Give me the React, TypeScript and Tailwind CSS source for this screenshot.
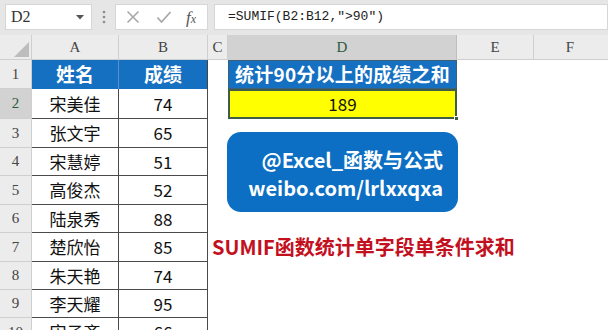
import React from "react";

const CJK = '"Noto Sans CJK SC", "Noto Sans", sans-serif';
const SERIF = '"Liberation Serif", "Noto Sans CJK SC", serif';

const rows: [string, string][] = [
  ["宋美佳", "74"],
  ["张文宇", "65"],
  ["宋慧婷", "51"],
  ["高俊杰", "52"],
  ["陆泉秀", "88"],
  ["楚欣怡", "85"],
  ["朱天艳", "74"],
  ["李天耀", "95"],
  ["宋子齐", "66"],
];

const rowHeights = [29, 30, 29, 28, 29, 28, 29, 28, 28, 29];

function RowHeader({ n, h, active }: { n: number; h: number; active?: boolean }) {
  return (
    <div
      className={
        "w-[32px] shrink-0 flex items-center justify-center border-b border-r border-[#cfcfcf] text-[15px] " +
        (active ? "bg-[#d2d2d2] text-[#2d5b3e]" : "bg-[#ececec] text-[#444]")
      }
      style={{ height: h, fontFamily: SERIF }}
    >
      {n}
    </div>
  );
}

export default function App() {
  return (
    <div className="relative w-[608px] h-[330px] overflow-hidden bg-white" style={{ fontFamily: CJK }}>
      {/* Toolbar */}
      <div className="h-[35px] bg-[#e6e6e6] flex items-start pt-[4px]">
        <div className="ml-[5px] w-[87px] h-[26px] bg-white border border-[#d6d6d6] flex items-center justify-between pl-[5px] pr-[7px]">
          <span className="text-[16px] text-[#333]" style={{ fontFamily: SERIF }}>D2</span>
          <svg width="8" height="5" viewBox="0 0 8 5">
            <polygon points="0,0 8,0 4,4.5" fill="#555" />
          </svg>
        </div>
        <div className="w-[23px] h-[26px] flex items-center justify-center">
          <svg width="4" height="14" viewBox="0 0 4 14">
            <circle cx="2" cy="2" r="1.3" fill="#8a8a8a" />
            <circle cx="2" cy="7" r="1.3" fill="#8a8a8a" />
            <circle cx="2" cy="12" r="1.3" fill="#8a8a8a" />
          </svg>
        </div>
        <div className="w-[93px] h-[26px] bg-white border border-[#d6d6d6] flex items-center">
          <svg className="ml-[10px]" width="14" height="14" viewBox="0 0 14 14">
            <path d="M1.5 1.5 L12.5 12.5 M12.5 1.5 L1.5 12.5" stroke="#a8a8a8" strokeWidth="1.6" />
          </svg>
          <svg className="ml-[16px]" width="16" height="14" viewBox="0 0 16 14">
            <path d="M1.5 7.5 L5.5 12 L14.5 2" stroke="#a8a8a8" strokeWidth="1.8" fill="none" />
          </svg>
          <span className="ml-[14px] italic text-[17px] text-[#555] leading-none" style={{ fontFamily: SERIF }}>
            f<span className="text-[12px]">x</span>
          </span>
        </div>
        <div className="ml-[6px] flex-1 h-[26px] bg-white border border-[#d6d6d6] flex items-center pl-[13px]">
          <span className="text-[13px] text-[#222]" style={{ fontFamily: '"Liberation Mono", monospace' }}>
            =SUMIF(B2:B12,″&gt;90″)
          </span>
        </div>
      </div>

      {/* Column header */}
      <div className="flex h-[25px] bg-[#ececec] border-b border-[#cfcfcf] text-[15px] text-[#444]" style={{ fontFamily: SERIF }}>
        <div className="w-[32px] shrink-0 border-r border-[#cfcfcf] flex items-end justify-end pr-[2px] pb-[2px]">
          <svg width="15" height="15" viewBox="0 0 15 15">
            <polygon points="15,0 15,15 0,15" fill="#bdbdbd" />
          </svg>
        </div>
        <div className="w-[87px] shrink-0 border-r border-[#cfcfcf] flex items-center justify-center">A</div>
        <div className="w-[89px] shrink-0 border-r border-[#cfcfcf] flex items-center justify-center">B</div>
        <div className="w-[20px] shrink-0 border-r border-[#cfcfcf] flex items-center justify-center">C</div>
        <div className="w-[229px] shrink-0 border-r border-[#bfbfbf] bg-[#d2d2d2] text-[#2d5b3e] flex items-center justify-center">D</div>
        <div className="w-[77px] shrink-0 border-r border-[#cfcfcf] flex items-center justify-center">E</div>
        <div className="flex-1 flex items-center justify-center pr-[2px]">F</div>
      </div>

      {/* Row 1 */}
      <div className="flex">
        <RowHeader n={1} h={rowHeights[0]} />
        <div className="w-[87px] shrink-0 bg-[#1570c1] text-white font-bold text-[19px] flex items-center justify-center border-r border-[#5a8fc8]" style={{ height: rowHeights[0] }}>
          姓名
        </div>
        <div className="w-[89px] shrink-0 bg-[#1570c1] text-white font-bold text-[19px] flex items-center justify-center border-r border-[#444]" style={{ height: rowHeights[0] }}>
          成绩
        </div>
        <div className="w-[20px] shrink-0" />
        <div className="w-[229px] shrink-0 bg-[#1570c1] text-white font-bold text-[19px] flex items-center justify-center border border-[#3d5f78] tracking-[0.2px]" style={{ height: rowHeights[0] }}>
          统计90分以上的成绩之和
        </div>
      </div>

      {/* Data rows */}
      {rows.map(([name, score], i) => (
        <div className="flex" key={i}>
          <RowHeader n={i + 2} h={rowHeights[i + 1]} active={i === 0} />
          <div
            className="w-[87px] shrink-0 border-r border-b border-[#4a4a4a] flex items-center justify-center text-[17px] text-[#111]"
            style={{ height: rowHeights[i + 1] }}
          >
            {name}
          </div>
          <div
            className="w-[89px] shrink-0 border-r border-b border-[#4a4a4a] flex items-center justify-center text-[17px] text-[#111]"
            style={{ height: rowHeights[i + 1] }}
          >
            {score}
          </div>
          <div className="w-[20px] shrink-0" />
          {i === 0 && (
            <div className="relative w-[229px] shrink-0 bg-[#ffff00] border-2 border-[#3e5c48] flex items-center justify-center text-[17px] text-[#111]" style={{ height: rowHeights[1] }}>
              189
              <div className="absolute right-[-4px] bottom-[-4px] w-[5px] h-[5px] bg-[#3e5c48] border border-white" />
            </div>
          )}
        </div>
      ))}

      {/* Shapes over the sheet */}
      <div className="absolute left-[227px] top-[132px] w-[231px] h-[80px] rounded-[14px] bg-[#0c6fc3] flex flex-col items-end justify-center pr-[15px] pt-[3px] text-white font-bold text-[20px] leading-[28px]">
        <div>@Excel_函数与公式</div>
        <div>weibo.com/lrlxxqxa</div>
      </div>
      <div className="absolute left-[212px] top-[234px] text-[20px] leading-[26px] font-bold text-[#c3101e]">
        SUMIF函数统计单字段单条件求和
      </div>
    </div>
  );
}
